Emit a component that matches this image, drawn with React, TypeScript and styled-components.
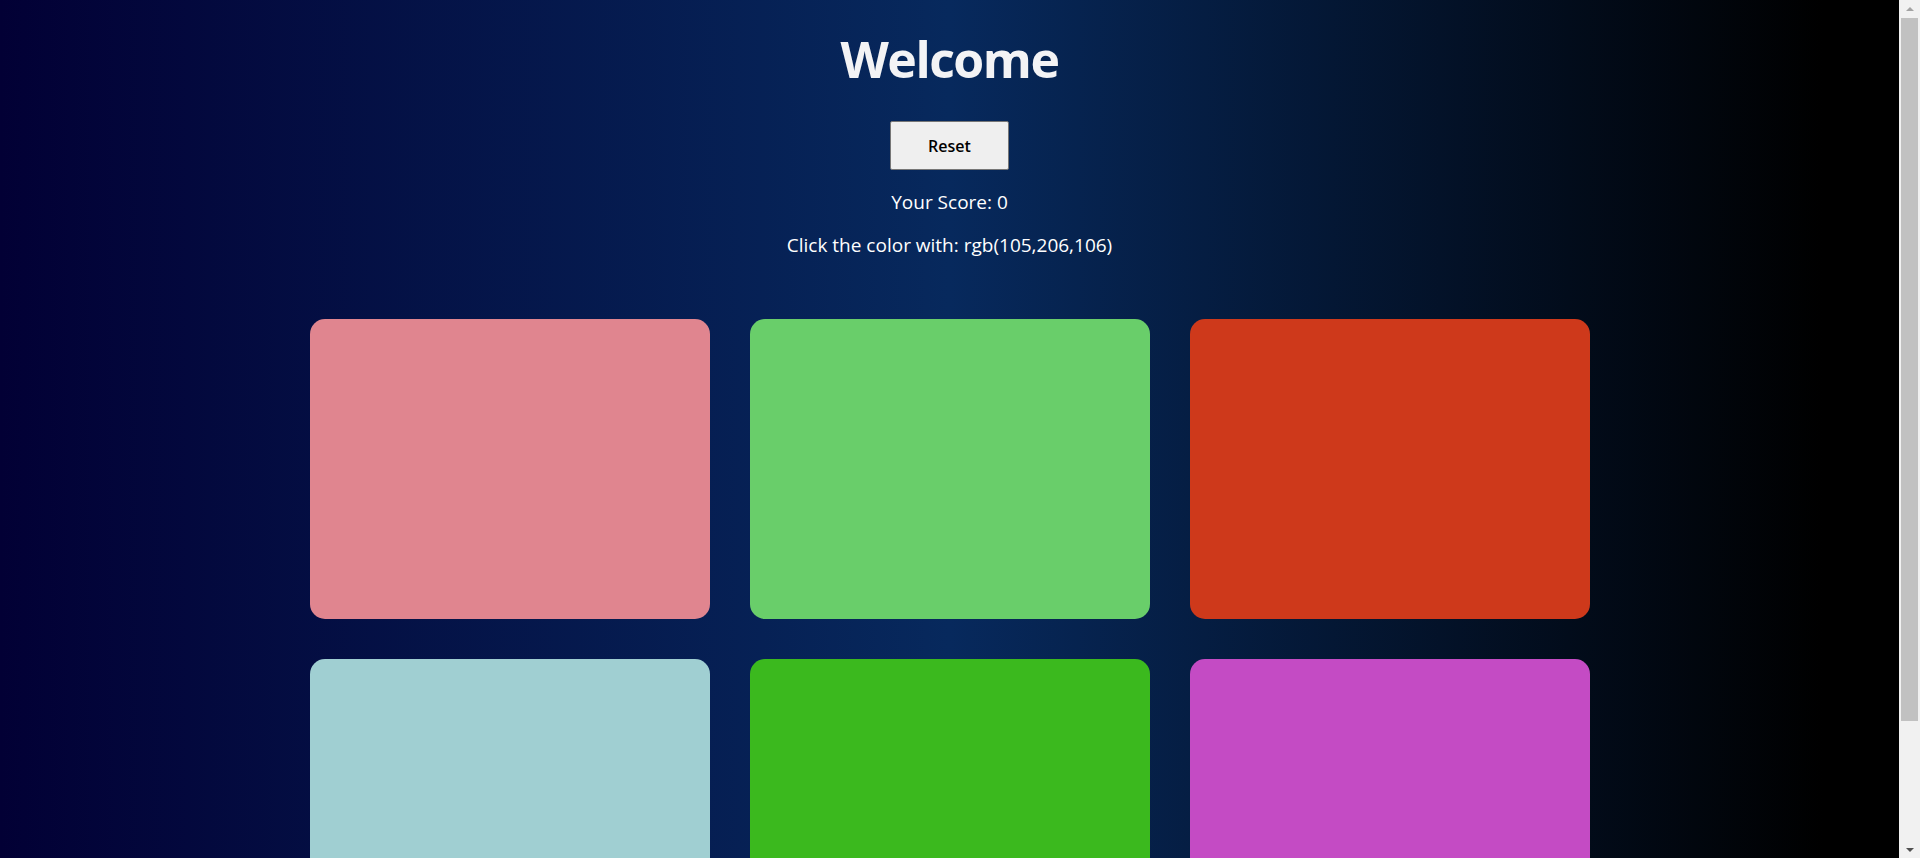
import React from "react";
import styled, { createGlobalStyle } from "styled-components";

const GlobalStyle = createGlobalStyle`
  html, body {
    margin: 0;
    padding: 0;
    overflow: hidden;
  }
  body {
    font-family: "Open Sans", "Noto Sans", sans-serif;
    color: #f4f4f6;
  }
`;

const Shell = styled.div`
  display: flex;
  height: 100vh;
`;

const Viewport = styled.div`
  flex: 1;
  overflow-y: auto;
  scrollbar-width: none;
  background: linear-gradient(90deg, #020035 0%, #07295d 50%, #000000 96%);
  &::-webkit-scrollbar {
    display: none;
  }
`;

const Rail = styled.aside`
  width: 21px;
  flex: none;
  background: #f1f1f1;
  display: flex;
  flex-direction: column;
  align-items: center;
`;

const ArrowBox = styled.div`
  height: 17px;
  width: 100%;
  flex: none;
  display: flex;
  align-items: center;
  justify-content: center;
`;

const Arrow = styled.span<{ $dir: "up" | "down" }>`
  width: 0;
  height: 0;
  border-left: 4px solid transparent;
  border-right: 4px solid transparent;
  ${(p) =>
    p.$dir === "up"
      ? "border-bottom: 4px solid #a3a3a3;"
      : "border-top: 4px solid #505050;"}
`;

const Thumb = styled.div`
  margin-top: 1px;
  width: 17px;
  height: 703px;
  background: #c1c1c1;
  flex: none;
`;

const Spacer = styled.div`
  flex: 1;
`;

const Page = styled.main`
  display: flex;
  flex-direction: column;
  align-items: center;
  padding: 34px 0 47px;
`;

const Title = styled.h1`
  margin: 0;
  font-size: 50px;
  line-height: 50px;
  font-weight: 700;
  color: #f3f3f5;
  letter-spacing: -1.5px;
`;

const ResetButton = styled.button`
  margin-top: 37px;
  width: 119px;
  height: 49px;
  background: #efefef;
  border: 1px solid #767676;
  border-radius: 2px;
  font-family: "Open Sans", "Noto Sans", sans-serif;
  font-size: 16px;
  font-weight: 600;
  color: #000;
  cursor: pointer;
`;

const Info = styled.p<{ $gap: number }>`
  margin: ${(p) => p.$gap}px 0 0;
  font-size: 19px;
  line-height: 24px;
  color: #ffffff;
`;

const Grid = styled.section`
  margin-top: 62px;
  display: grid;
  grid-template-columns: repeat(3, 400px);
  grid-auto-rows: 300px;
  gap: 40px;
`;

const Tile = styled.div<{ $color: string }>`
  background: ${(p) => p.$color};
  border-radius: 15px;
  cursor: pointer;
`;

const colors = [
  "rgb(224,133,143)",
  "rgb(105,206,106)",
  "rgb(206,57,27)",
  "rgb(160,207,210)",
  "rgb(59,185,30)",
  "rgb(196,75,196)",
];

export default function App() {
  return (
    <>
      <GlobalStyle />
      <Shell>
        <Viewport>
          <Page>
            <Title>Welcome</Title>
            <ResetButton>Reset</ResetButton>
            <Info $gap={20}>Your Score: 0</Info>
            <Info $gap={19}>Click the color with: rgb(105,206,106)</Info>
            <Grid>
              {colors.map((c, i) => (
                <Tile key={i} $color={c} />
              ))}
            </Grid>
          </Page>
        </Viewport>
        <Rail aria-hidden="true">
          <ArrowBox>
            <Arrow $dir="up" />
          </ArrowBox>
          <Thumb />
          <Spacer />
          <ArrowBox>
            <Arrow $dir="down" />
          </ArrowBox>
        </Rail>
      </Shell>
    </>
  );
}
